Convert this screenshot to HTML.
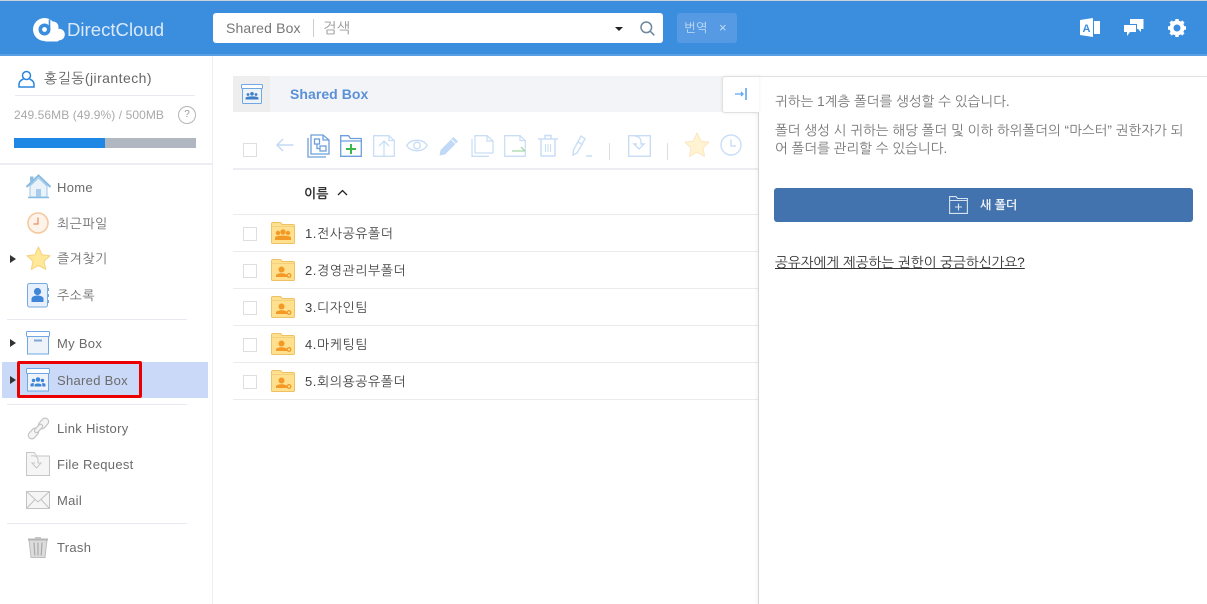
<!DOCTYPE html>
<html lang="ko"><head><meta charset="utf-8"><title>DirectCloud</title>
<style>
html,body{margin:0;padding:0;background:#fff}
body{width:1207px;height:604px;overflow:hidden;position:relative;font-family:"Liberation Sans","NanumGothic","Noto Sans CJK KR",sans-serif;font-size:13px;color:#666}
.a{position:absolute}
.t{position:absolute;white-space:nowrap;line-height:18px}
.nav{color:#6b6b6b;letter-spacing:.3px;left:57px}
.k{letter-spacing:.45px}
.hr{position:absolute;height:1px;background:#e8e9f0}
.cb{position:absolute;width:12px;height:12px;border:1px solid #dedede;background:#fff;left:243px}
.row{position:absolute;left:233px;width:525px;height:1px;background:#ebebeb}
.fn{position:absolute;left:305px;white-space:nowrap;line-height:18px;color:#444;letter-spacing:.55px}
.p{font-size:13.6px;color:#777}
svg{position:absolute;overflow:visible}
</style></head><body>

<!-- header -->
<div class="a" style="left:0;top:0;width:1207px;height:1px;background:#c8d3dd"></div>
<div class="a" style="left:0;top:1px;width:1207px;height:53px;background:#3b8dde"></div>
<div class="a" style="left:0;top:54px;width:1207px;height:2px;background:#5a9fe3"></div>
<svg style="left:33px;top:17px" width="32" height="25" viewBox="0 0 32 25"><g fill="#fff"><circle cx="11.500" cy="12.500" r="11.500"/><circle cx="20" cy="10" r="5.500"/><circle cx="26" cy="17.500" r="5.800"/><rect x="11" y="14" width="15" height="10.500" rx="2"/></g><circle cx="11.500" cy="12.500" r="6" fill="#3b8dde"/><circle cx="11.500" cy="12.500" r="2.400" fill="#fff"/><path d="M16.500 2.500V12" stroke="#3b8dde" stroke-width="1.600"/></svg>
<div class="t" style="left:67px;top:17px;font-size:18.600px;line-height:26px;color:#d9e9f9">DirectCloud</div>
<div class="a" style="left:213px;top:13px;width:450px;height:30px;background:#fff;border-radius:3px"></div>
<div class="t" style="left:226px;top:19px;font-size:14px;color:#777;letter-spacing:.15px">Shared Box</div>
<div class="a" style="left:313px;top:19px;width:1px;height:18px;background:#ccc"></div>
<div class="t" style="left:323px;top:20px;font-size:14.500px;color:#999">검색</div>
<div class="a" style="left:615px;top:27px;border-left:4px solid transparent;border-right:4px solid transparent;border-top:4px solid #222"></div>
<svg style="left:640px;top:21px" width="15" height="15" viewBox="0 0 15 15" fill="none" stroke="#6f879f" stroke-width="1.500"><circle cx="6.300" cy="6.300" r="5.300"/><path d="M10.200 10.200L14.300 14.300"/></svg>
<div class="a" style="left:677px;top:13px;width:60px;height:30px;background:#559ae3;border-radius:3px"></div>
<div class="t" style="left:684px;top:19px;font-size:12.500px;color:#c5dcf5">번역</div>
<div class="t" style="left:719px;top:19px;font-size:13px;color:#c5dcf5">×</div>
<svg style="left:1080px;top:17px" width="21" height="21" viewBox="0 0 21 21" fill="#fff"><path d="M0 3L13 1V20L0 18z"/><path d="M14 4H20V17H14z"/><text x="2.500" y="15" font-family="Liberation Sans" font-size="11" font-weight="700" fill="#3b8dde">A</text></svg>
<svg style="left:1124px;top:18px" width="20" height="19" viewBox="0 0 20 19" fill="#fff"><path d="M6 1H19.500V11H17V14L14 11H13V6H6z"/><path d="M0 7H12V14H6L3 18V14H0z"/></svg>
<svg style="left:1168px;top:19px" width="18" height="18" viewBox="0 0 18 18"><circle cx="9" cy="9" r="5.500" fill="none" stroke="#fff" stroke-width="4"/><g stroke="#fff" stroke-width="3.400"><path d="M9 0v3M9 15v3M0 9h3M15 9h3M2.600 2.600l2.100 2.100M13.300 13.300l2.100 2.100M2.600 15.400l2.100-2.100M13.300 4.700l2.100-2.100"/></g></svg>

<!-- sidebar -->
<div class="a" style="left:212px;top:56px;width:1px;height:548px;background:#eceef3"></div>
<svg style="left:18px;top:70px" width="17" height="18" viewBox="0 0 17 18" fill="none" stroke="#2b86de" stroke-width="1.500"><circle cx="8.500" cy="5.500" r="4"/><path d="M5.500 9C3 10 1 11.500 1 14.500V17H16V14.500C16 11.500 14 10 11.500 9"/></svg>
<div class="t" style="left:44px;top:69px;font-size:14px;color:#666;letter-spacing:.45px">홍길동(jirantech)</div>
<div class="hr" style="left:15px;top:95px;width:180px"></div>
<div class="t" style="left:14px;top:106px;font-size:12px;color:#a9a9a9;letter-spacing:.08px">249.56MB (49.9%) / 500MB</div>
<div class="a" style="left:178px;top:106px;width:16px;height:16px;border:1px solid #b5b5b5;border-radius:50%;font-size:10px;line-height:16px;text-align:center;color:#999">?</div>
<div class="a" style="left:14px;top:138px;width:91px;height:10px;background:#1f88e5"></div>
<div class="a" style="left:105px;top:138px;width:91px;height:10px;background:#b0b7c0"></div>
<div class="a" style="left:0;top:163px;width:212px;height:2px;background:#eceef3"></div>

<svg style="left:26px;top:174px" width="25" height="25" viewBox="0 0 25 25"><path d="M4 2.500h3.500v5H4z" fill="#8fbfe3"/><path d="M4 12V23H21V12L12.500 4z" fill="#eaf3fa" stroke="#9cc6e6"/><path d="M0.500 13L12.500 1.500 24.500 13" fill="none" stroke="#86bbe2" stroke-width="2"/><path d="M10 15h5v8h-5z" fill="#a8cdec"/><path d="M2 23.500h21" stroke="#86bbe2" stroke-width="1.500"/></svg>
<div class="t nav" style="top:179px">Home</div>
<svg style="left:27px;top:212px" width="22" height="22" viewBox="0 0 22 22"><circle cx="11" cy="11" r="10" fill="#fdf3ea" stroke="#f5c79a" stroke-width="1.500"/><path d="M11 5.500V12H6.500" fill="none" stroke="#ea8d5b" stroke-width="1.200"/></svg>
<div class="t nav k" style="top:215px">최근파일</div>
<div class="a" style="left:10px;top:255px;border-left:6px solid #333;border-top:4px solid transparent;border-bottom:4px solid transparent"></div>
<svg style="left:26px;top:246px" width="25" height="25" viewBox="0 0 25 25"><path d="M12.500 1L16 8.700 24 9.700 18 15.200 19.700 23.500 12.500 19.400 5.300 23.500 7 15.200 1 9.700 9 8.700z" fill="#ffe897" stroke="#f6d27e" stroke-linejoin="round"/></svg>
<div class="t nav k" style="top:250px">즐겨찾기</div>
<svg style="left:27px;top:283px" width="23" height="25" viewBox="0 0 23 25"><rect x=".5" y=".5" width="20" height="23.500" rx="2" fill="#e8f1fb" stroke="#76a9e2"/><circle cx="10.500" cy="8.500" r="3.600" fill="#3f86d9"/><path d="M4.500 19v-3c0-2.500 3-3.500 6-3.500s6 1 6 3.500v3z" fill="#3f86d9"/><path d="M21 5v3M21 11v3M21 17v3" stroke="#76a9e2" stroke-width="2"/></svg>
<div class="t nav k" style="top:287px">주소록</div>
<div class="hr" style="left:7px;top:319px;width:180px"></div>

<div class="a" style="left:10px;top:339px;border-left:6px solid #333;border-top:4px solid transparent;border-bottom:4px solid transparent"></div>
<svg style="left:26px;top:331px" width="24" height="24" viewBox="0 0 24 24"><rect x="1.500" y="5" width="21" height="18" fill="#eef3fa" stroke="#6fa8e4"/><rect x=".5" y=".5" width="23" height="5" rx="1" fill="#fff" stroke="#6fa8e4"/><path d="M8 9.500h8" stroke="#7fa6d4" stroke-width="2"/></svg>
<div class="t nav" style="top:335px">My Box</div>

<div class="a" style="left:2px;top:362px;width:206px;height:36px;background:#c9d9f7"></div>
<div class="a" style="left:17px;top:361px;width:119px;height:31px;border:3px solid #ea0000;border-radius:2px"></div>
<div class="a" style="left:10px;top:376px;border-left:6px solid #333;border-top:4px solid transparent;border-bottom:4px solid transparent"></div>
<svg style="left:26px;top:368px" width="24" height="24" viewBox="0 0 24 24"><rect x="1.500" y="5" width="21" height="18" fill="#eef3fa" stroke="#6fa8e4"/><rect x=".5" y=".5" width="23" height="5" rx="1" fill="#fff" stroke="#6fa8e4"/><g fill="#3f86d9"><circle cx="12" cy="11.500" r="2.300"/><circle cx="7.500" cy="12.500" r="1.700"/><circle cx="16.500" cy="12.500" r="1.700"/><path d="M8.500 18.500v-1.500c0-2 7-2 7 0v1.500zM4.500 18.500v-2c0-1.500 3-1.700 3.500-1l-.5 3zM19.500 18.500v-2c0-1.500-3-1.700-3.500-1l.5 3z"/></g></svg>
<div class="t nav" style="top:372px">Shared Box</div>
<div class="hr" style="left:7px;top:404px;width:180px"></div>

<svg style="left:26px;top:416px" width="25" height="25" viewBox="0 0 25 25" fill="#f4f4f4" stroke="#c4c4c4" stroke-width="1.200"><rect x="-6" y="-3.500" width="12" height="7" rx="3.500" transform="translate(7.500 17.500) rotate(-48)"/><rect x="-6" y="-3.500" width="12" height="7" rx="3.500" transform="translate(17.500 7.500) rotate(-48)"/><rect x="-5" y="-2" width="10" height="4" rx="2" transform="translate(12.500 12.500) rotate(-48)"/></svg>
<div class="t nav" style="top:420px">Link History</div>
<svg style="left:26px;top:452px" width="24" height="24" viewBox="0 0 24 24"><path d="M.5 .5H8C10 2 10 4 11 4H23.500V23.500H.5z" fill="#f5f5f5" stroke="#c6c6c6"/><path d="M5 4C9 3 12 5 12 8V11H15L10.500 16 6 11H9" fill="#f5f5f5" stroke="#c6c6c6"/></svg>
<div class="t nav" style="top:456px">File Request</div>
<svg style="left:26px;top:491px" width="24" height="18" viewBox="0 0 24 18" fill="#f5f5f5" stroke="#c2c2c2"><rect x=".5" y=".5" width="23" height="17"/><path d="M.5 .5L12 11 23.500 .5M.5 17.500L9 8.500M23.500 17.500L15 8.500" fill="none"/></svg>
<div class="t nav" style="top:492px">Mail</div>
<div class="hr" style="left:7px;top:523px;width:180px"></div>
<svg style="left:28px;top:536px" width="20" height="22" viewBox="0 0 20 22"><path d="M1 3.500H19L17 21.500H3z" fill="#dcdcdc" stroke="#bdbdbd"/><path d="M0 3.500h20" stroke="#b5b5b5" stroke-width="2"/><path d="M7 1h6v2H7z" fill="#c5c5c5"/><path d="M6 6.500l.8 13M10 6.500v13M14 6.500l-.8 13" stroke="#a9a9a9" stroke-width="1.200"/></svg>
<div class="t nav" style="top:539px">Trash</div>

<!-- main -->
<div class="a" style="left:233px;top:76px;width:525px;height:36px;background:#f3f4f7"></div>
<div class="a" style="left:233px;top:76px;width:37px;height:36px;background:#eeeeef"></div>
<svg style="left:241px;top:84px" width="22" height="20" viewBox="0 0 22 20"><rect x="1.500" y="4" width="19" height="15.500" rx="1" fill="#eef3fa" stroke="#6fa8e4"/><rect x=".5" y=".5" width="21" height="4" rx="1" fill="#fff" stroke="#6fa8e4"/><g fill="#3f7fc8"><circle cx="11" cy="9.800" r="1.800"/><circle cx="7" cy="10.500" r="1.400"/><circle cx="15" cy="10.500" r="1.400"/><path d="M4.500 15.500v-1.500c0-2.200 13-2.200 13 0v1.500z"/></g></svg>
<div class="t" style="left:290px;top:85px;font-size:14px;font-weight:700;color:#5a90d6;letter-spacing:.05px">Shared Box</div>

<div class="cb" style="top:143px"></div>
<svg style="left:276px;top:138px" width="18" height="14" viewBox="0 0 18 14" fill="none" stroke="#c4daf5" stroke-width="1.500"><path d="M17.500 7H1M7 1L1 7l6 6"/></svg>
<svg style="left:307px;top:134px" width="23" height="24" viewBox="0 0 23 24" fill="#fff" stroke="#6d9fdc" stroke-width="1.300"><path d="M1 4V23H19" fill="none"/><path d="M4 1H16L22 6V20H4z"/><path d="M16 1V6H22" fill="none"/><rect x="7.500" y="5" width="5" height="5"/><rect x="13" y="12" width="6" height="5"/><path d="M10 10v4.500h3" fill="none"/></svg>
<svg style="left:340px;top:135px" width="22" height="22" viewBox="0 0 22 22"><path d="M.7 21.300V.7H8.500L10.500 3.500H21.300V21.300z" fill="#fff" stroke="#6d9fdc" stroke-width="1.300"/><path d="M.7 6H21.300" stroke="#6d9fdc" stroke-width="1.300"/><path d="M11 9v10M6 14h10" stroke="#3cb84a" stroke-width="2"/></svg>
<svg style="left:373px;top:135px" width="22" height="22" viewBox="0 0 22 22" fill="none" stroke="#c9def6" stroke-width="1.300"><path d="M.7 21.300V.7H16L21.300 5.500V21.300z"/><path d="M16 .7V5.500H21.300"/><path d="M11 21V6M6 11l5-5 5 5"/></svg>
<svg style="left:406px;top:138px" width="22" height="15" viewBox="0 0 22 15" fill="none" stroke="#c9def6" stroke-width="1.400"><path d="M.7 7.500C5 .5 17 .5 21.300 7.500 17 14.500 5 14.500 .7 7.500z"/><circle cx="11" cy="7.500" r="3.300"/></svg>
<svg style="left:439px;top:136px" width="20" height="20" viewBox="0 0 20 20" fill="#c0d9f6"><path d="M14.500 1L19 5.500 6 18.500 0.500 19.500 1.500 14z"/><path d="M12.500 3.500l4 4" stroke="#fff"/></svg>
<svg style="left:471px;top:135px" width="23" height="22" viewBox="0 0 23 22" fill="none" stroke="#c9def6" stroke-width="1.300"><path d="M1 4V21.300H18"/><path d="M4 .7H16L22 6V18H4z" fill="#fff"/><path d="M16 .7V6H22"/></svg>
<svg style="left:504px;top:135px" width="22" height="22" viewBox="0 0 22 22" fill="none" stroke="#c9def6" stroke-width="1.300"><path d="M.7 21.300V.7H16L21.300 5.500V21.300z"/><path d="M16 .7V5.500H21.300"/><path d="M8 16H21M17 12l4 4" stroke="#a6d8a8"/></svg>
<svg style="left:538px;top:134px" width="20" height="23" viewBox="0 0 20 23" fill="none" stroke="#c9def6" stroke-width="1.500"><path d="M0 5h20M7 5V1.500h6V5"/><path d="M3 5V22H17V5"/><path d="M7.500 10v8M10 10v8M12.500 10v8" stroke-width="1.100"/></svg>
<svg style="left:571px;top:135px" width="22" height="22" viewBox="0 0 22 22" fill="none" stroke="#c9def6" stroke-width="1.400"><path d="M10 1l4 3L6 18l-4 2 .5-5zM7.500 7l4 3M15 21H21"/></svg>
<div class="a" style="left:609px;top:143px;width:1px;height:17px;background:#ddd"></div>
<svg style="left:628px;top:135px" width="23" height="22" viewBox="0 0 23 22" fill="none" stroke="#c9def6" stroke-width="1.400"><path d="M.7 .7H22.300V21.300H.7z"/><path d="M7 1C10 1 13 3 13 7V9H16L11 14 6 9H9"/></svg>
<div class="a" style="left:667px;top:143px;width:1px;height:17px;background:#ddd"></div>
<svg style="left:684px;top:132px" width="26" height="26" viewBox="0 0 26 26"><path d="M13 1L16.800 9 25 10.200 19 16 20.500 24.500 13 20.300 5.500 24.500 7 16 1 10.200 9.200 9z" fill="#fff3d2" stroke="#f9e8bf" stroke-linejoin="round"/></svg>
<svg style="left:720px;top:134px" width="22" height="22" viewBox="0 0 22 22" fill="none" stroke="#c9def6" stroke-width="1.400"><circle cx="11" cy="11" r="10"/><path d="M11 5.500V12H16"/></svg>
<div class="a" style="left:233px;top:168px;width:525px;height:2px;background:#eceef3"></div>

<div class="t" style="left:304px;top:185px;font-size:13px;font-weight:700;color:#333">이름</div>
<svg style="left:337px;top:189px" width="11" height="7" viewBox="0 0 11 7" fill="none" stroke="#222" stroke-width="1.300"><path d="M1 6L5.500 1.500 10 6"/></svg>

<div class="row" style="top:214px"></div>
<div class="row" style="top:251px"></div>
<div class="row" style="top:288px"></div>
<div class="row" style="top:325px"></div>
<div class="row" style="top:362px"></div>
<div class="row" style="top:399px"></div>

<div class="cb" style="top:227px"></div>
<div class="cb" style="top:264px"></div>
<div class="cb" style="top:301px"></div>
<div class="cb" style="top:338px"></div>
<div class="cb" style="top:375px"></div>

<svg width="0" height="0" style="position:absolute"><defs>
<g id="f"><path d="M.5 20.500V2C.5 1 1 .5 2 .5H9C10 .5 10.500 1 11 2.500H22C23 2.500 23.500 3 23.500 4V20.500C23.500 21 23 21.500 22.500 21.500H1.500C1 21.500 .5 21 .5 20.500z" fill="#ffe08f" stroke="#eec163"/><path d="M.5 4.500H23.500" stroke="#f4cf7c"/></g>
<g id="u"><circle cx="10.500" cy="10.500" r="3" fill="#f39a26"/><path d="M5 18v-1.500c0-3 11-3 11 0V18z" fill="#f39a26"/><circle cx="18" cy="16.500" r="1.800" fill="#ffe08f" stroke="#f39a26" stroke-width="1.300"/></g>
<g id="s" fill="#f39a26"><circle cx="12" cy="10" r="2.700"/><circle cx="7" cy="11" r="2.200"/><circle cx="17" cy="11" r="2.200"/><path d="M4 18v-2.500c0-2.500 16-2.500 16 0V18z"/></g>
</defs></svg>
<svg style="left:271px;top:222px" width="24" height="22" viewBox="0 0 24 22"><use href="#f"/><use href="#s"/></svg>
<svg style="left:271px;top:259px" width="24" height="22" viewBox="0 0 24 22"><use href="#f"/><use href="#u"/></svg>
<svg style="left:271px;top:296px" width="24" height="22" viewBox="0 0 24 22"><use href="#f"/><use href="#u"/></svg>
<svg style="left:271px;top:333px" width="24" height="22" viewBox="0 0 24 22"><use href="#f"/><use href="#u"/></svg>
<svg style="left:271px;top:370px" width="24" height="22" viewBox="0 0 24 22"><use href="#f"/><use href="#u"/></svg>

<div class="fn" style="top:225px">1.전사공유폴더</div>
<div class="fn" style="top:262px">2.경영관리부폴더</div>
<div class="fn" style="top:299px">3.디자인팀</div>
<div class="fn" style="top:336px">4.마케팅팀</div>
<div class="fn" style="top:373px">5.회의용공유폴더</div>

<!-- right panel -->
<div class="a" style="left:758px;top:76px;width:449px;height:528px;background:#fff;border-left:1px solid #d5d5d5;border-top:1px solid #e2e2e2;box-sizing:border-box;box-shadow:-2px 0 3px rgba(0,0,0,.04)"></div>
<div class="a" style="left:722px;top:76px;width:36px;height:35px;background:#fff;border:1px solid #e0e0e0;border-right:none;border-radius:3px 0 0 3px;box-shadow:0 0 3px rgba(0,0,0,.08)"></div>
<svg style="left:735px;top:88px" width="12" height="12" viewBox="0 0 12 12" fill="none" stroke="#5fa5ee" stroke-width="1.300"><path d="M0 6H8M6 4l2 2-2 2"/><path d="M11 0V12" stroke-width="1.600"/></svg>

<div class="t p" style="left:775px;top:93px">귀하는 1계층 폴더를 생성할 수 있습니다.</div>
<div class="t p" style="left:775px;top:122px">폴더 생성 시 귀하는 해당 폴더 및 이하 하위폴더의 “마스터” 권한자가 되</div>
<div class="t p" style="left:775px;top:140px">어 폴더를 관리할 수 있습니다.</div>

<div class="a" style="left:774px;top:188px;width:419px;height:34px;background:#4273ae;border-radius:3px"></div>
<svg style="left:949px;top:196px" width="19" height="18" viewBox="0 0 19 18" fill="none" stroke="#d5e2f0" stroke-width="1.100"><path d="M.6 17.400V.6H7L8.500 2.500H18.400V17.400z"/><path d="M.6 4.500H18.400M9.500 7.500v7M6 11h7"/></svg>
<div class="t" style="left:980px;top:196px;font-size:12px;font-weight:700;color:#eef3f9">새 폴더</div>

<div class="t" style="left:775px;top:254px;font-size:13.650px;color:#333;text-decoration:underline">공유자에게 제공하는 권한이 궁금하신가요?</div>

</body></html>
